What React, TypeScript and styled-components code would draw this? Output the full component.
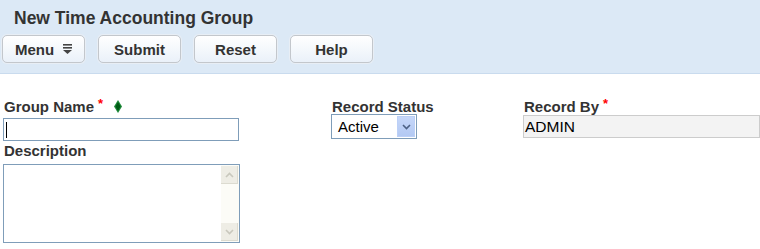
import styled, { createGlobalStyle } from 'styled-components';

const GlobalStyle = createGlobalStyle`
  html, body {
    margin: 0;
    padding: 0;
    background: #ffffff;
    font-family: "Liberation Sans", Arial, sans-serif;
  }
`;

const Header = styled.div`
  height: 74px;
  background: #dce9f6;
  border-bottom: 1px solid #c9dbee;
  padding: 0 0 0 2px;
  box-sizing: border-box;
`;

const Title = styled.h1`
  margin: 0;
  padding: 8px 0 0 12px;
  height: 27px;
  box-sizing: border-box;
  font-size: 17.5px;
  line-height: 20px;
  font-weight: bold;
  color: #333333;
`;

const Toolbar = styled.div`
  display: flex;
  gap: 13px;
  margin-top: 8px;
`;

const ToolButton = styled.button<{ $width: number }>`
  width: ${(p) => p.$width}px;
  height: 28px;
  border: 1px solid #c3c7cc;
  border-radius: 5px;
  background: linear-gradient(#ffffff, #eaf1f9);
  font-family: "Liberation Sans", Arial, sans-serif;
  font-size: 15px;
  font-weight: bold;
  color: #333333;
  display: flex;
  align-items: center;
  justify-content: center;
  gap: 9px;
  padding: 0;
  box-shadow: 0 0 0 1px #e8eef5;
`;

const Form = styled.div`
  display: grid;
  grid-template-columns: 328px 192px 1fr;
  padding: 24px 0 0 3px;
`;

const Field = styled.div`
  display: flex;
  flex-direction: column;
`;

const Label = styled.label<{ $gap?: number; $top?: number }>`
  display: flex;
  align-items: center;
  font-size: 15px;
  line-height: 17px;
  font-weight: bold;
  color: #333333;
  padding-left: 1px;
  margin-top: ${(p) => p.$top ?? 0}px;
  margin-bottom: ${(p) => p.$gap ?? 3}px;
`;

const Required = styled.span`
  color: #ff0000;
  font-size: 13px;
  margin-left: 4px;
  align-self: flex-start;
  line-height: 12px;
`;

const Diamond = styled.svg`
  margin-left: 11px;
`;

const InputWrap = styled.div`
  position: relative;
  width: 236px;
`;

const TextInput = styled.input`
  box-sizing: border-box;
  width: 236px;
  height: 23px;
  border: 1px solid #7f9db9;
  outline: none;
  font-family: "Liberation Sans", Arial, sans-serif;
  font-size: 14px;
  padding: 0 3px;
`;

const Caret = styled.span`
  position: absolute;
  left: 3px;
  top: 4px;
  width: 1px;
  height: 16px;
  background: #000000;
`;

const TextAreaBox = styled.div`
  box-sizing: border-box;
  width: 237px;
  height: 79px;
  border: 1px solid #7f9db9;
  display: flex;
`;

const TextArea = styled.textarea`
  flex: 1;
  border: none;
  outline: none;
  resize: none;
  overflow: hidden;
  font-family: "Liberation Sans", Arial, sans-serif;
  font-size: 14px;
`;

const ScrollTrack = styled.div`
  width: 17px;
  background: #fcfcf7;
  display: flex;
  flex-direction: column;
  justify-content: space-between;
  padding: 1px 1px 1px 0;
`;

const ScrollButton = styled.div`
  height: 17px;
  background: #eeede5;
  border-right: 1px solid #dcdbd0;
  border-bottom: 1px solid #dcdbd0;
  display: flex;
  align-items: center;
  justify-content: center;
`;

const SelectBox = styled.div`
  box-sizing: border-box;
  width: 86px;
  height: 25px;
  border: 1px solid #7f9db9;
  display: flex;
  align-items: center;
  justify-content: space-between;
  padding: 1px;
  font-size: 15px;
  color: #000000;
  margin-top: -4px;
`;

const SelectText = styled.span`
  padding-left: 5px;
`;

const SelectArrow = styled.div`
  width: 18px;
  height: 21px;
  background: linear-gradient(#c6d7f9, #b3c9f3);
  border: 1px solid #bcd0f7;
  box-sizing: border-box;
  display: flex;
  align-items: center;
  justify-content: center;
`;

const ReadOnly = styled.div`
  box-sizing: border-box;
  height: 23px;
  background: #f3f3f3;
  border: 1px solid #cccccc;
  font-size: 15.5px;
  line-height: 21px;
  padding-left: 1px;
  color: #000000;
  margin-top: -3px;
`;

const Chevron = ({ up, color }: { up?: boolean; color: string }) => (
  <svg width="9" height="6" viewBox="0 0 9 6">
    <path
      d={up ? 'M1 5 L4.5 1.5 L8 5' : 'M1 1 L4.5 4.5 L8 1'}
      fill="none"
      stroke={color}
      strokeWidth="1.6"
    />
  </svg>
);

export default function App() {
  return (
    <>
      <GlobalStyle />
      <Header>
        <Title>New Time Accounting Group</Title>
        <Toolbar>
          <ToolButton $width={83}>
            Menu
            <svg width="9" height="10" viewBox="0 0 9 10">
              <rect x="0" y="0" width="9" height="1.6" fill="#444" />
              <rect x="0" y="3" width="9" height="1.6" fill="#444" />
              <path d="M0 6 L9 6 L4.5 10 Z" fill="#444" />
            </svg>
          </ToolButton>
          <ToolButton $width={83}>Submit</ToolButton>
          <ToolButton $width={83}>Reset</ToolButton>
          <ToolButton $width={83}>Help</ToolButton>
        </Toolbar>
      </Header>
      <Form>
        <Field>
          <Label>
            Group Name<Required>*</Required>
            <Diamond width="8" height="13" viewBox="0 0 8 13">
              <path d="M4 0 L8 6.5 L4 13 L0 6.5 Z" fill="#1e8a3a" />
              <path d="M4 2 L6.5 6.5 L4 11 L1.5 6.5 Z" fill="#005a14" />
            </Diamond>
          </Label>
          <InputWrap>
            <TextInput type="text" />
            <Caret />
          </InputWrap>
          <Label $top={1} $gap={5}>Description</Label>
          <TextAreaBox>
            <TextArea />
            <ScrollTrack>
              <ScrollButton>
                <Chevron up color="#c9c8bd" />
              </ScrollButton>
              <ScrollButton>
                <Chevron color="#c9c8bd" />
              </ScrollButton>
            </ScrollTrack>
          </TextAreaBox>
        </Field>
        <Field>
          <Label>Record Status</Label>
          <SelectBox>
            <SelectText>Active</SelectText>
            <SelectArrow>
              <Chevron color="#4d6185" />
            </SelectArrow>
          </SelectBox>
        </Field>
        <Field>
          <Label>
            Record By<Required>*</Required>
          </Label>
          <ReadOnly>ADMIN</ReadOnly>
        </Field>
      </Form>
    </>
  );
}
